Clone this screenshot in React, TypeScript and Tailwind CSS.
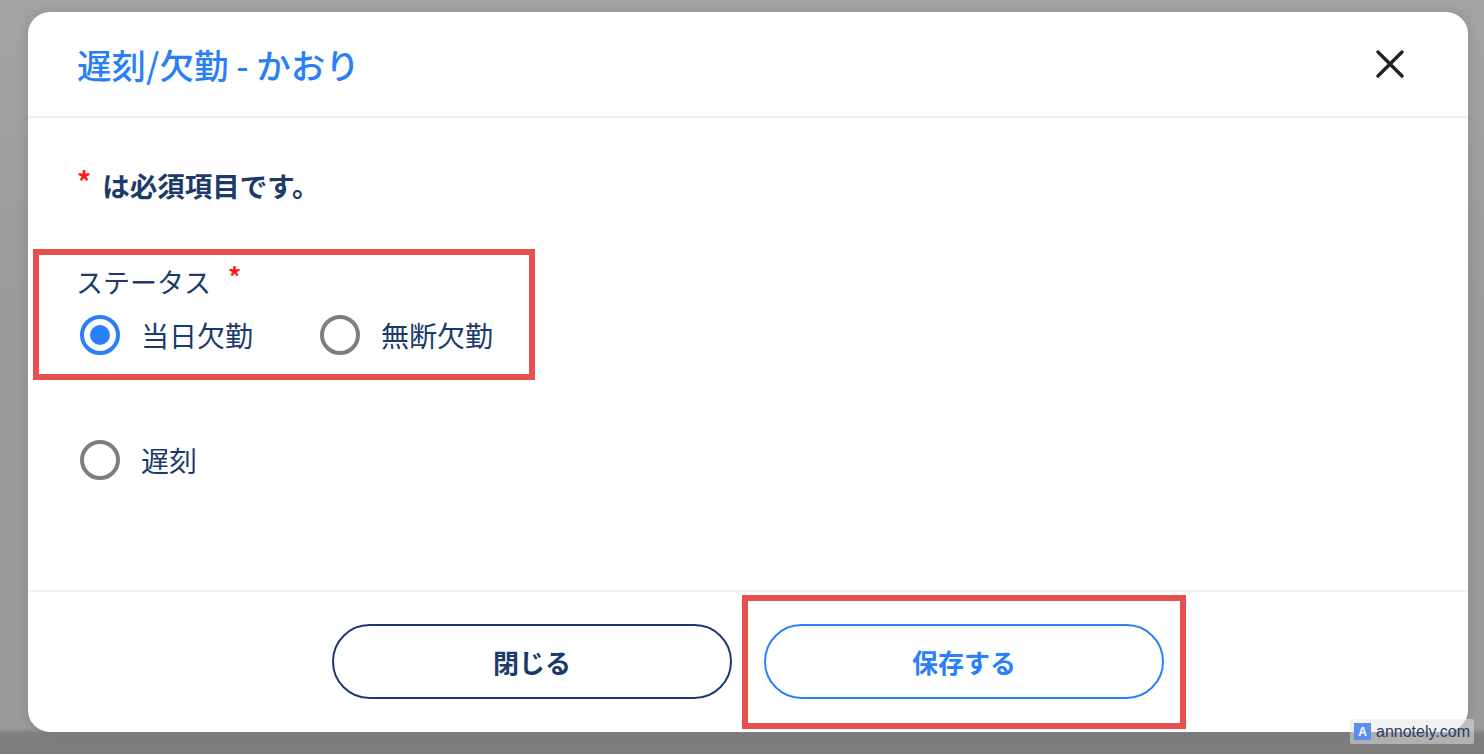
import React from 'react';

const navy = 'text-[#1c3a6c]';

function Radio({ label, checked }: { label: string; checked?: boolean }) {
  return (
    <label className="flex items-center gap-[21px]">
      {checked ? (
        <span className="flex h-[40px] w-[40px] items-center justify-center rounded-full border-[4px] border-[#2a7ffb]">
          <span className="h-[20px] w-[20px] rounded-full bg-[#2a7ffb]" />
        </span>
      ) : (
        <span className="h-[40px] w-[40px] rounded-full border-[4px] border-[#7f7f7f]" />
      )}
      <span className={`text-[28px] leading-[36px] ${navy}`}>{label}</span>
    </label>
  );
}

export default function App() {
  return (
    <div
      className="relative h-[754px] w-[1484px] overflow-hidden bg-[linear-gradient(to_bottom,#a4a4a4_0px,#9b9b9b_300px,#9a9a9a_728px,#808080_734px,#7b7b7b_754px)] pl-[28px] pt-[12px]"
      style={{ fontFamily: '"Noto Sans CJK JP", "Noto Sans", sans-serif' }}
    >
      <div className="flex h-[720px] w-[1440px] flex-col overflow-hidden rounded-[22px] bg-white shadow-[0_0_14px_rgba(0,0,0,0.12)]">
        {/* header */}
        <div className="flex h-[106px] shrink-0 items-center justify-between border-b-2 border-[#f1f1f1] pl-[49px] pr-[63px]">
          <h2 className="text-[34.5px] font-medium leading-[40px] text-[#2a7ff5]">遅刻/欠勤 - かおり</h2>
          <button className="flex h-[30px] w-[30px] items-center justify-center">
            <svg width="28" height="28" viewBox="0 0 28 28" fill="none" stroke="#222" strokeWidth="3.4" strokeLinecap="round">
              <path d="M2 2 26 26M26 2 2 26" />
            </svg>
          </button>
        </div>

        {/* body */}
        <div className="flex flex-1 flex-col pl-[49px] pt-[49px]">
          <p className={`flex items-start text-[27.5px] font-bold leading-[36px] ${navy}`}>
            <span className="mr-[11px] text-[28px] leading-[28px] text-[#ff1a1a]">*</span>
            は必須項目です。
          </p>

          <div className="-ml-[44px] mt-[46px] w-[502px] border-[6px] border-[#e84f4f] pb-[19px] pl-[37px] pt-[9px]">
            <div className={`flex items-start text-[27px] leading-[36px] ${navy}`}>
              ステータス
              <span className="ml-[17px] text-[26px] font-bold leading-[24px] text-[#ff1a1a]">*</span>
            </div>
            <div className="mt-[15px] flex gap-[67px] pl-[4px]">
              <Radio label="当日欠勤" checked />
              <Radio label="無断欠勤" />
            </div>
          </div>

          <div className="mt-[60px] pl-[3px]">
            <Radio label="遅刻" />
          </div>
        </div>

        {/* footer */}
        <div className="flex h-[142px] shrink-0 items-start justify-center gap-[32px] border-t-2 border-[#f1f1f1] pt-[32px]">
          <button className={`h-[75px] w-[400px] rounded-full border-2 border-[#1c3a6c] text-[26px] font-bold ${navy}`}>
            閉じる
          </button>
          <span className="relative">
            <button className="h-[75px] w-[400px] rounded-full border-2 border-[#2a7ffb] text-[26px] font-bold text-[#2a7ffb]">
              保存する
            </button>
            <span className="pointer-events-none absolute -bottom-[30px] -left-[22px] -right-[22px] -top-[29px] border-[6px] border-[#e84f4f]" />
          </span>
        </div>
      </div>

      {/* watermark */}
      <div className="absolute bottom-[10px] right-[10px] flex h-[25px] items-center gap-[5px] rounded-[2px] bg-[rgba(230,230,230,0.5)] px-[4px]">
        <span className="flex h-[17px] w-[17px] items-center justify-center bg-[#5a8ff0] text-[12px] font-bold leading-none text-white" style={{ fontFamily: '"Liberation Sans", sans-serif' }}>
          A
        </span>
        <span className="text-[16px] leading-none text-[#2c3b68]" style={{ fontFamily: '"Liberation Sans", sans-serif' }}>
          annotely.com
        </span>
      </div>
    </div>
  );
}
